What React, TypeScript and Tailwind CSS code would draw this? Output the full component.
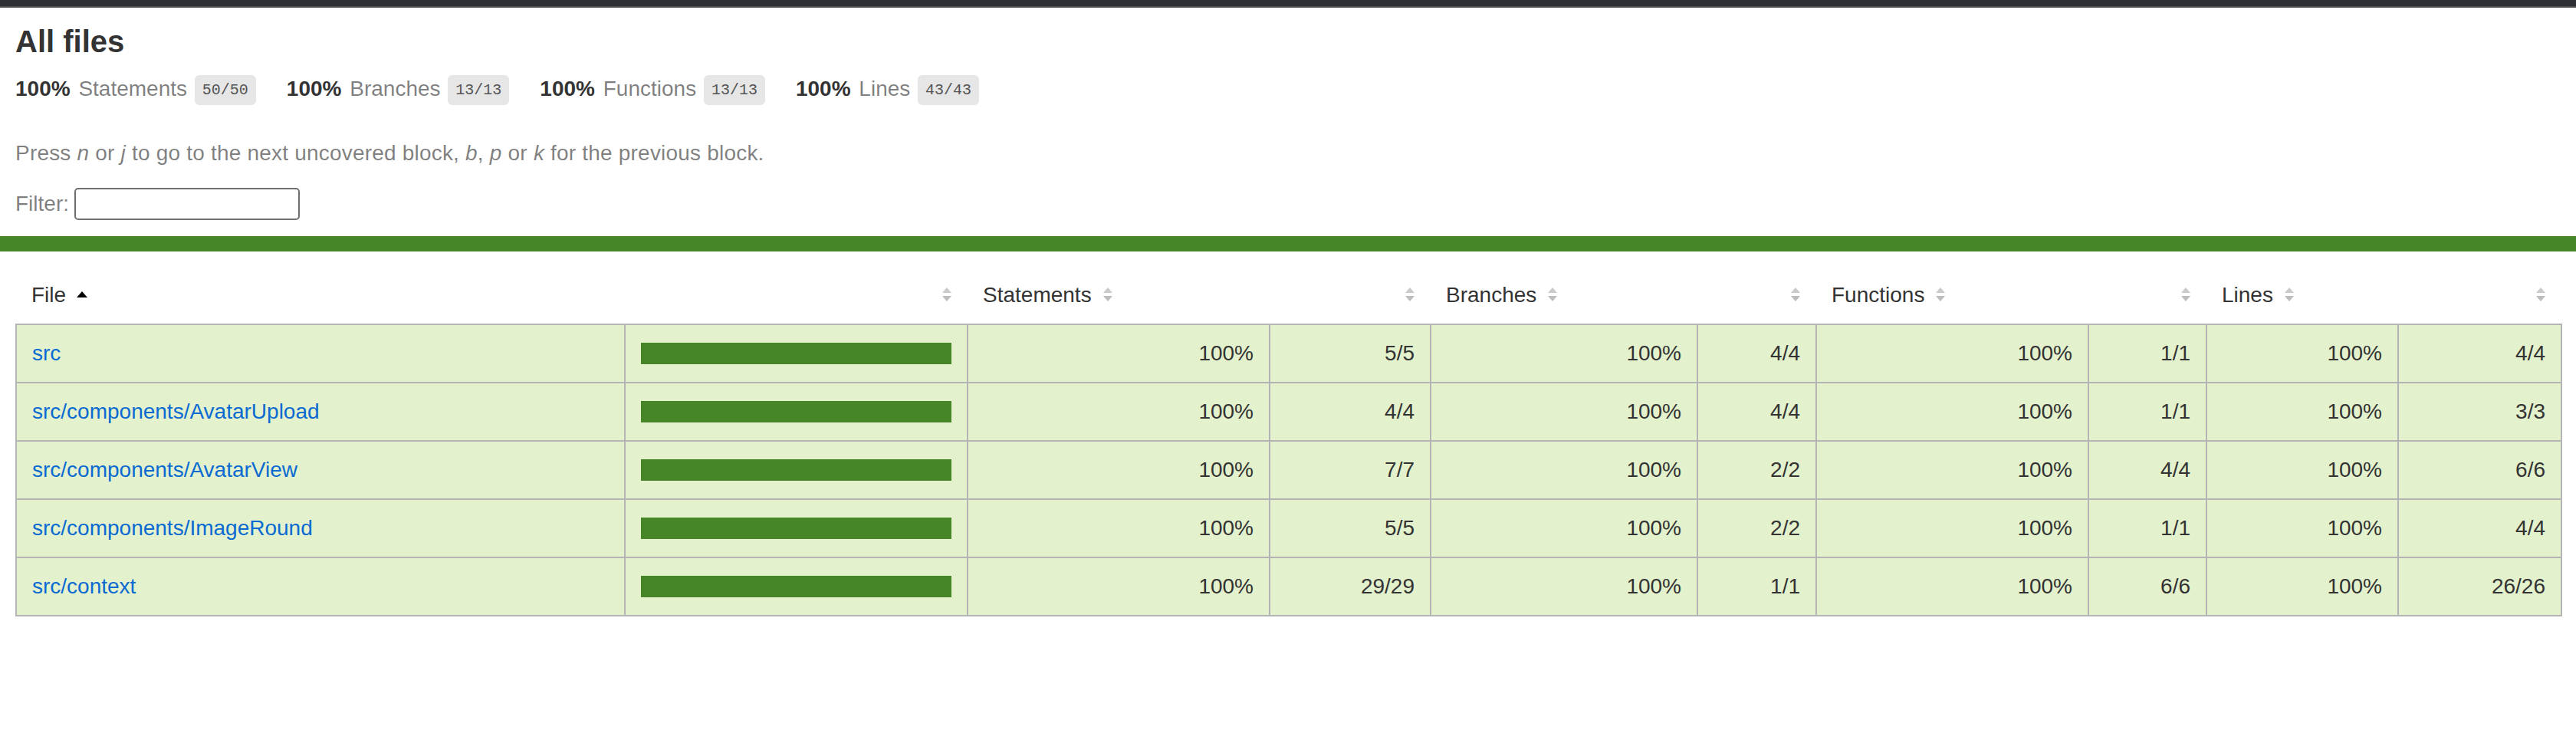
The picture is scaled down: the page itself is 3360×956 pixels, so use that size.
import React from "react";

const rows: string[][] = [
  ["src", "5/5", "4/4", "1/1", "4/4"],
  ["src/components/AvatarUpload", "4/4", "4/4", "1/1", "3/3"],
  ["src/components/AvatarView", "7/7", "2/2", "4/4", "6/6"],
  ["src/components/ImageRound", "5/5", "2/2", "1/1", "4/4"],
  ["src/context", "29/29", "1/1", "6/6", "26/26"],
];

const stats = [
  { label: "Statements", frac: "50/50" },
  { label: "Branches", frac: "13/13" },
  { label: "Functions", frac: "13/13" },
  { label: "Lines", frac: "43/43" },
];

function Sorter({ sorted }: { sorted?: boolean }) {
  return (
    <span className="ml-[14px] inline-block h-[20px] w-[14px] align-baseline">
      <svg width="14" height="20" viewBox="0 0 14 20" className="block">
        {sorted ? (
          <polygon points="0,14 7,6 14,14" fill="#000" />
        ) : (
          <>
            <polygon points="1,8 7,1 13,8" fill="#cacaca" />
            <polygon points="1,12 13,12 7,19" fill="#bdbdbd" />
          </>
        )}
      </svg>
    </span>
  );
}

const thBase = "px-5 py-5 leading-[34px] font-normal whitespace-nowrap";
const tdBase = "px-5 py-5 leading-[34px] border-r-2 border-[#b4b4b4] whitespace-nowrap";

export default function App() {
  return (
    <div className="min-h-screen bg-white text-[28px] text-[#333] font-['Liberation_Sans',Arial,sans-serif]">
      <div className="h-[8px] bg-[#2e2f33]" />
      <div className="h-[2px] bg-[#4b4c50]" />

      <div className="p-5">
        <h1 className="m-0 text-[40px] font-bold leading-[48px]">All files</h1>
        <div className="flex">
          {stats.map((s) => (
            <div key={s.label} className="py-5 pr-10 leading-[36px] whitespace-nowrap">
              <span className="font-bold">{"100% "}</span>
              <span className="ml-[3px] text-black/50">{s.label}</span>{" "}
              <span className="ml-[2px] rounded-[6px] bg-[#e6e6e6] px-[10px] py-[8px] align-middle font-['Liberation_Mono',monospace] text-[20px] text-[#555]">
                {s.frac}
              </span>
            </div>
          ))}
        </div>
        <p className="my-7 leading-[32px] tracking-[0.2px] text-black/50">
          Press <em>n</em> or <em>j</em> to go to the next uncovered block, <em>b</em>,{" "}
          <em>p</em> or <em>k</em> for the previous block.
        </p>
        <div className="flex h-[44px] items-center text-black/50">
          <span className="leading-[32px]">Filter:</span>
          <input
            type="search"
            className="ml-[7px] h-[42px] w-[294px] rounded-[5px] border-2 border-[#6f6f6f] bg-white"
          />
        </div>
      </div>

      <div className="h-5 bg-[#468629]" />

      <div className="p-5">
        <table className="w-full table-fixed border-collapse">
          <colgroup>
            <col className="w-[794px]" />
            <col className="w-[447px]" />
            <col className="w-[394px]" />
            <col className="w-[210px]" />
            <col className="w-[348px]" />
            <col className="w-[155px]" />
            <col className="w-[355px]" />
            <col className="w-[154px]" />
            <col className="w-[250px]" />
            <col className="w-[213px]" />
          </colgroup>
          <thead>
            <tr>
              <th className={`${thBase} text-left`}>
                File
                <Sorter sorted />
              </th>
              <th className={`${thBase} text-right`}>
                <Sorter />
              </th>
              <th className={`${thBase} text-left`}>
                Statements
                <Sorter />
              </th>
              <th className={`${thBase} text-right`}>
                <Sorter />
              </th>
              <th className={`${thBase} text-left`}>
                Branches
                <Sorter />
              </th>
              <th className={`${thBase} text-right`}>
                <Sorter />
              </th>
              <th className={`${thBase} text-left`}>
                Functions
                <Sorter />
              </th>
              <th className={`${thBase} text-right`}>
                <Sorter />
              </th>
              <th className={`${thBase} text-left`}>
                Lines
                <Sorter />
              </th>
              <th className={`${thBase} text-right`}>
                <Sorter />
              </th>
            </tr>
          </thead>
          <tbody className="border-2 border-[#b4b4b4]">
            {rows.map((r) => (
              <tr key={r[0]} className="border-b-2 border-[#b4b4b4] bg-[#e3f2cd]">
                <td className={`${tdBase} text-left`}>
                  <a className="text-[#0a6ad2] no-underline">{r[0]}</a>
                </td>
                <td className={`${tdBase} align-middle`}>
                  <div className="h-[28px] w-full bg-[#468629]" />
                </td>
                <td className={`${tdBase} text-right`}>100%</td>
                <td className={`${tdBase} text-right`}>{r[1]}</td>
                <td className={`${tdBase} text-right`}>100%</td>
                <td className={`${tdBase} text-right`}>{r[2]}</td>
                <td className={`${tdBase} text-right`}>100%</td>
                <td className={`${tdBase} text-right`}>{r[3]}</td>
                <td className={`${tdBase} text-right`}>100%</td>
                <td className="px-5 py-5 text-right leading-[34px] whitespace-nowrap">{r[4]}</td>
              </tr>
            ))}
          </tbody>
        </table>
      </div>
    </div>
  );
}
